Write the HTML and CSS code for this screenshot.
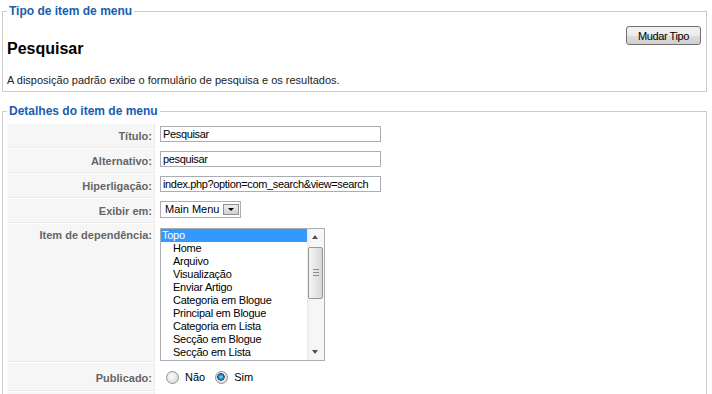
FILE: index.html
```html
<!DOCTYPE html>
<html lang="pt">
<head>
    <meta charset="UTF-8">
    <title>Editar item de menu</title>
    <link rel="stylesheet" href="styles.css">
</head>
<body>
    <fieldset class="panel">
        <legend>Tipo de item de menu</legend>
        <div class="type-body">
            <div class="type-info">
                <h2 class="type-title">Pesquisar</h2>
                <p class="type-desc">A disposição padrão exibe o formulário de pesquisa e os resultados.</p>
            </div>
            <button type="button" class="btn">Mudar Tipo</button>
        </div>
    </fieldset>

    <fieldset class="panel panel-details">
        <legend>Detalhes do item de menu</legend>
        <table class="admintable">
            <tr>
                <td class="key">Título:</td>
                <td class="value"><input class="inputbox" type="text" value="Pesquisar"></td>
            </tr>
            <tr>
                <td class="key">Alternativo:</td>
                <td class="value"><input class="inputbox" type="text" value="pesquisar"></td>
            </tr>
            <tr>
                <td class="key">Hiperligação:</td>
                <td class="value"><input class="inputbox" type="text" value="index.php?option=com_search&amp;view=search"></td>
            </tr>
            <tr>
                <td class="key">Exibir em:</td>
                <td class="value">
                    <div class="dropdown">
                        <span class="dropdown-text">Main Menu</span>
                        <span class="dropdown-arrow"></span>
                    </div>
                </td>
            </tr>
            <tr>
                <td class="key key-top">Item de dependência:</td>
                <td class="value value-list">
                    <div class="listbox">
                        <ul class="listbox-items">
                            <li class="selected">Topo</li>
                            <li class="child">Home</li>
                            <li class="child">Arquivo</li>
                            <li class="child">Visualização</li>
                            <li class="child">Enviar Artigo</li>
                            <li class="child">Categoria em Blogue</li>
                            <li class="child">Principal em Blogue</li>
                            <li class="child">Categoria em Lista</li>
                            <li class="child">Secção em Blogue</li>
                            <li class="child">Secção em Lista</li>
                        </ul>
                        <div class="scrollbar">
                            <span class="sb-arrow sb-up"></span>
                            <span class="sb-track"><span class="sb-thumb"></span></span>
                            <span class="sb-arrow sb-down"></span>
                        </div>
                    </div>
                </td>
            </tr>
            <tr>
                <td class="key key-radio">Publicado:</td>
                <td class="value value-radio">
                    <label class="radio"><input type="radio" name="published"> Não</label>
                    <label class="radio"><input type="radio" name="published" checked> Sim</label>
                </td>
            </tr>
            <tr>
                <td class="key"></td>
                <td class="value"></td>
            </tr>
        </table>
    </fieldset>
</body>
</html>
```

FILE: styles.css
```css
/* Page */
html, body {
    overflow: hidden;
}

body {
    margin: 0;
    background: #fff;
    color: #333;
    font-family: "Liberation Sans", Arial, sans-serif;
    font-size: 11px;
}

/* Fieldsets */
.panel {
    margin: 4px 5px 0 2px;
    padding: 0 4px 4px;
    border: 1px solid #ccc;
}

.panel legend {
    padding: 0 2px;
    font-size: 12px;
    font-weight: bold;
    line-height: 15px;
    color: #1a5cb0;
}

.panel-details {
    margin-top: 12px;
}

/* Menu item type */
.type-body {
    display: flex;
    justify-content: space-between;
    align-items: flex-start;
}

.type-title {
    margin: 21px 0 0;
    font-size: 16px;
    line-height: 18px;
    color: #000;
}

.type-desc {
    margin: 15px 0 0;
    line-height: 14px;
    color: #222;
}

.btn {
    margin: 7px 1px 0 0;
    width: 75px;
    height: 19px;
    padding: 0;
    border: 1px solid #707070;
    border-radius: 3px;
    background: linear-gradient(#f2f2f2 0%, #ebebeb 50%, #dddddd 51%, #cfcfcf 100%);
    font-family: "Liberation Sans", Arial, sans-serif;
    font-size: 11px;
    letter-spacing: -0.4px;
    color: #000;
}

/* Details table */
.admintable {
    margin-top: 4px;
    border-spacing: 1px;
    width: 100%;
}

.admintable td {
    box-sizing: border-box;
    padding: 0;
}

.admintable td.key {
    width: 147px;
    height: 24px;
    padding: 0 2px 0 0;
    background: #f6f6f6;
    border-bottom: 1px solid #e9e9e9;
    border-right: 1px solid #e9e9e9;
    text-align: right;
    vertical-align: middle;
    font-weight: bold;
    color: #666;
    white-space: nowrap;
}

.admintable td.key-top {
    vertical-align: top;
    padding-top: 5px;
    height: 138px;
}

.admintable td.key-radio {
    height: 28px;
    padding-top: 2px;
}

.admintable td.value {
    padding: 2px 0 0 4px;
    vertical-align: top;
}

.admintable td.value-list {
    padding-top: 4px;
}

.admintable td.value-radio {
    padding-top: 2px;
    vertical-align: middle;
}

.inputbox {
    box-sizing: border-box;
    display: block;
    width: 221px;
    height: 16px;
    margin: 0;
    padding: 0 2px;
    border: 1px solid #abadb3;
    font-family: "Liberation Sans", Arial, sans-serif;
    font-size: 11px;
    letter-spacing: -0.35px;
    color: #000;
}

/* Fake select */
.dropdown {
    box-sizing: border-box;
    display: flex;
    align-items: center;
    width: 81px;
    height: 17px;
    border: 1px solid #abadb3;
    color: #000;
}

.dropdown-text {
    flex: 1;
    padding-left: 4px;
    line-height: 15px;
}

.dropdown-arrow {
    position: relative;
    box-sizing: border-box;
    width: 16px;
    height: 11px;
    margin-right: 1px;
    border: 1px solid #8e8f8f;
    background: linear-gradient(#f0f0f0, #cfcfcf);
}

.dropdown-arrow::after {
    content: "";
    position: absolute;
    left: 4px;
    top: 3px;
    border-left: 3px solid transparent;
    border-right: 3px solid transparent;
    border-top: 3px solid #000;
}

/* Listbox */
.listbox {
    box-sizing: border-box;
    display: flex;
    width: 165px;
    height: 133px;
    border: 1px solid #abadb3;
    background: #fff;
    overflow: hidden;
}

.listbox-items {
    flex: 1;
    margin: 0;
    padding: 0;
    list-style: none;
    overflow: hidden;
}

.listbox-items li {
    height: 13px;
    padding-left: 1px;
    line-height: 13px;
    letter-spacing: -0.25px;
    color: #000;
    white-space: nowrap;
}

.listbox-items li.child {
    padding-left: 12px;
}

.listbox-items li.selected {
    background: #3399ff;
    color: #fff;
}

.scrollbar {
    display: flex;
    flex-direction: column;
    width: 17px;
    background: linear-gradient(to right, #e8e8e8, #f6f6f6 20%, #f6f6f6);
}

.sb-arrow {
    position: relative;
    height: 17px;
}

.sb-arrow::after {
    content: "";
    position: absolute;
    left: 5px;
    border-left: 3px solid transparent;
    border-right: 3px solid transparent;
}

.sb-up::after {
    top: 6px;
    border-bottom: 4px solid #505050;
}

.sb-down::after {
    top: 7px;
    border-top: 4px solid #505050;
}

.sb-track {
    flex: 1;
    padding: 1px 1px 0;
}

.sb-thumb {
    position: relative;
    display: block;
    box-sizing: border-box;
    height: 52px;
    border: 1px solid #979797;
    border-radius: 2px;
    background: linear-gradient(to right, #f4f4f4, #e6e6e6 50%, #d6d6d6);
}

.sb-thumb::after {
    content: "";
    position: absolute;
    left: 4px;
    top: 21px;
    width: 6px;
    height: 7px;
    background: repeating-linear-gradient(#8a8a8a 0 1px, transparent 1px 3px);
}

/* Radios */
.radio {
    display: inline-flex;
    align-items: center;
    gap: 6px;
    margin-right: 1px;
    color: #000;
}

.radio input {
    appearance: none;
    width: 13px;
    height: 13px;
    margin: 0 0 0 6px;
    border: 1px solid #8e8f8f;
    border-radius: 50%;
    background: radial-gradient(circle at 40% 40%, #fafafa, #d4d4d4);
}

.radio input:checked {
    background:
        radial-gradient(circle at 45% 45%, #9ee3f6 0, #2c8fc6 2px, #0f4f86 3.5px, transparent 4px),
        radial-gradient(circle at 40% 40%, #fafafa, #d4d4d4);
}
```
